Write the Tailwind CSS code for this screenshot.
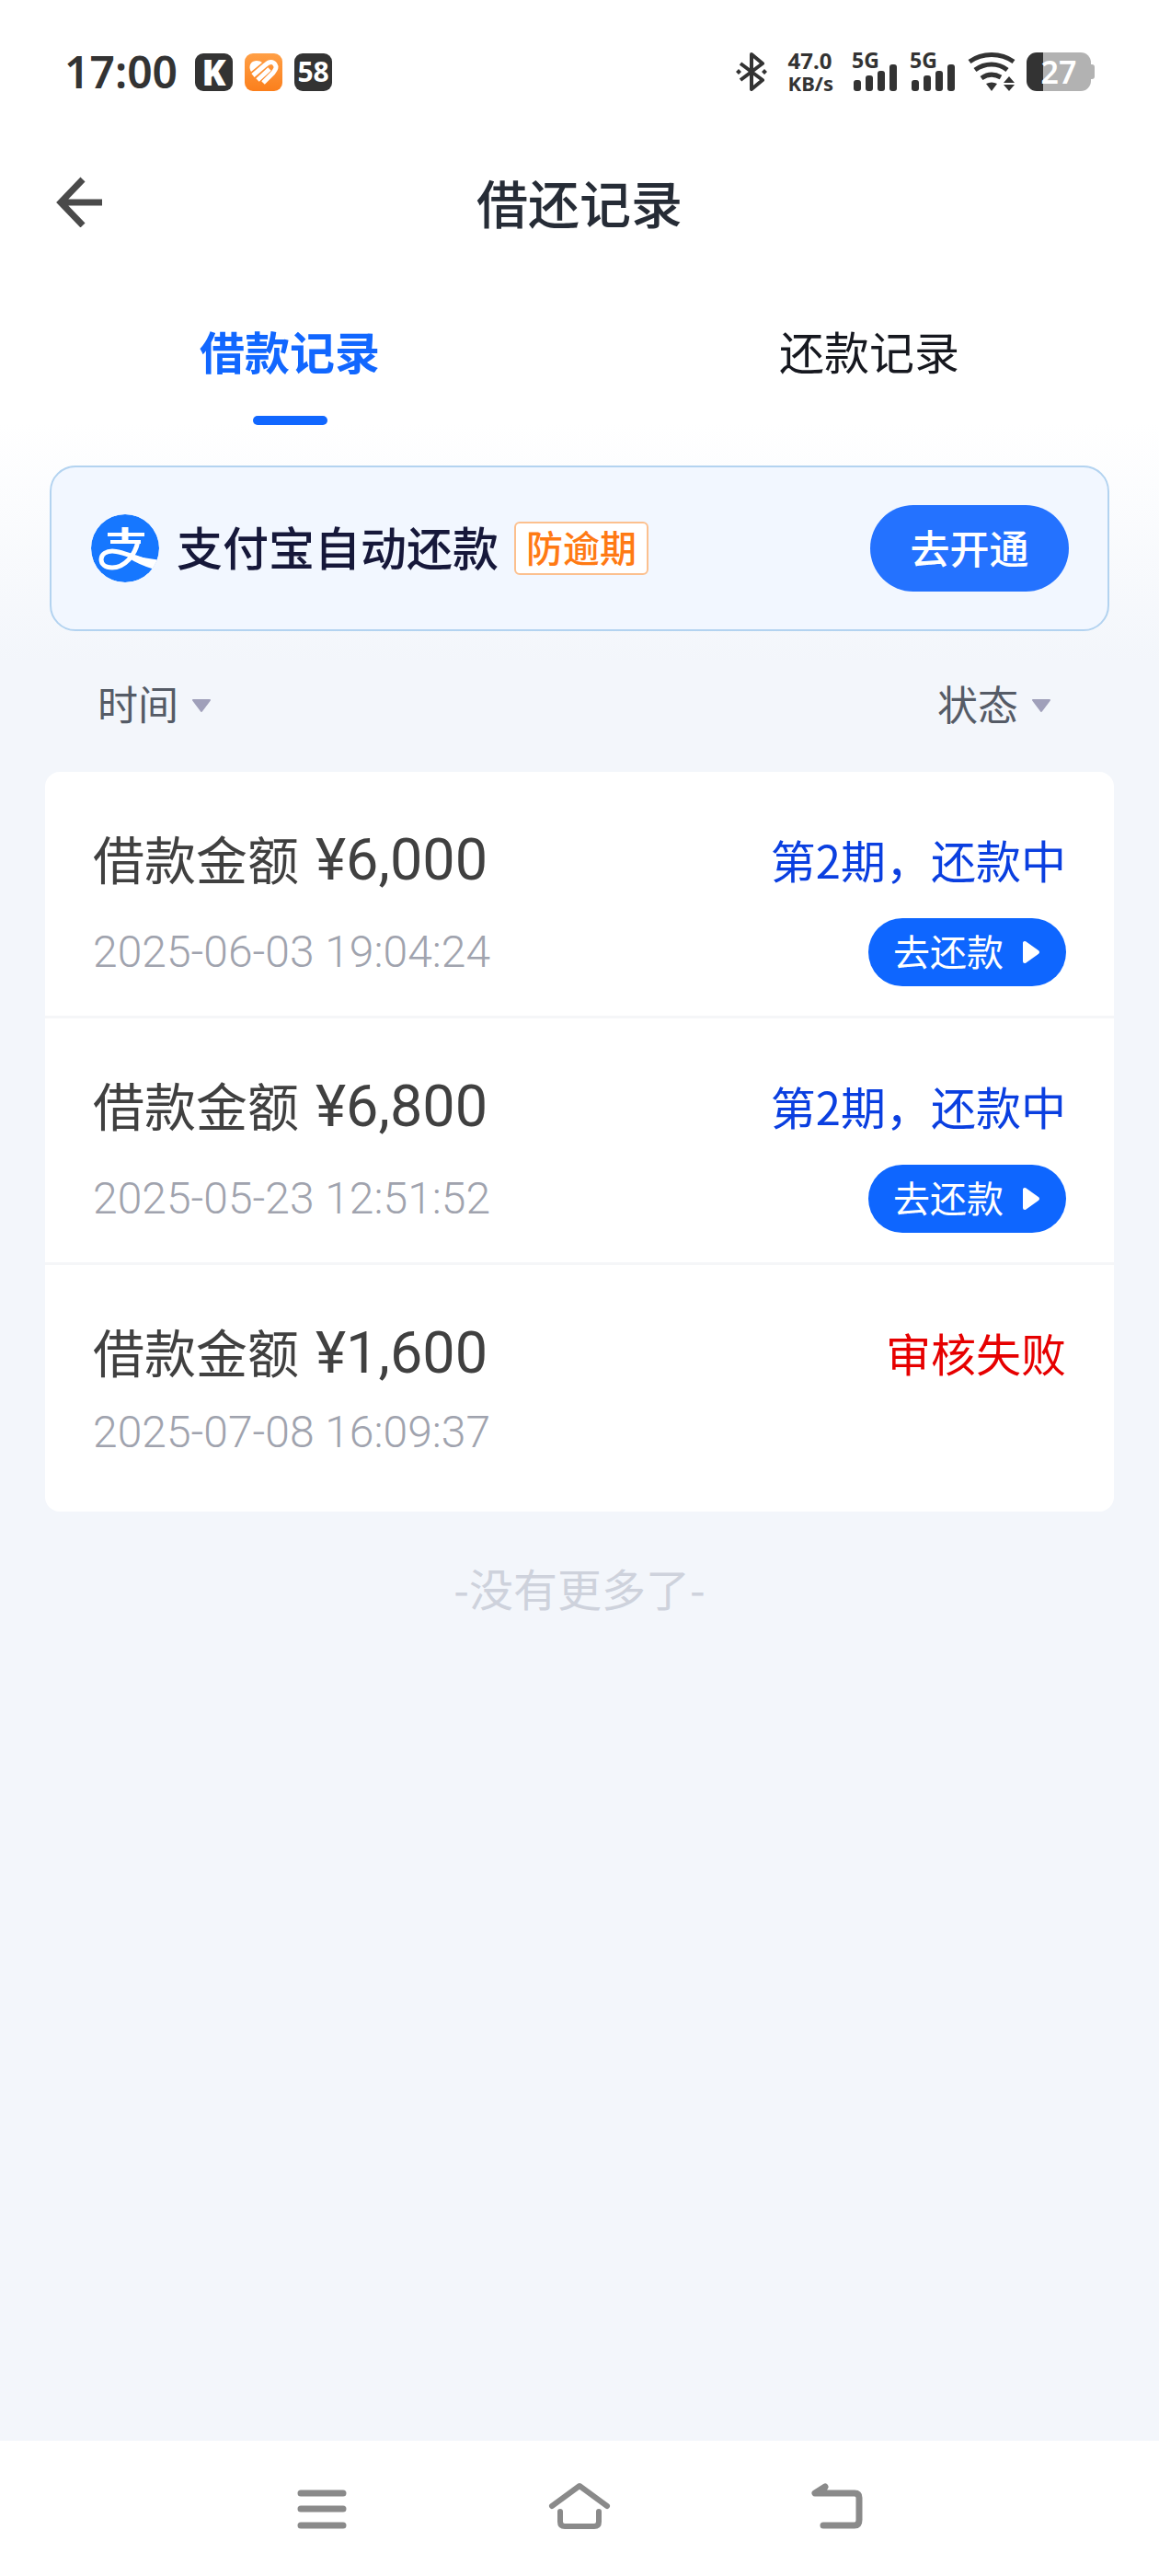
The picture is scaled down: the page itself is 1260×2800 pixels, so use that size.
<!DOCTYPE html>
<html lang="zh-CN">
<head>
<meta charset="utf-8">
<meta name="viewport" content="width=device-width, initial-scale=1">
<title>借还记录</title>
<script src="https://cdn.jsdelivr.net/npm/@tailwindcss/browser@4"></script>
</head>
<body class="flex min-h-screen flex-col bg-[#f3f6fb] bg-[linear-gradient(to_bottom,#ffffff_460px,#f3f6fb_720px)] font-['Noto_Sans_CJK_SC',sans-serif] text-[#404040]">

  <!-- Status bar -->
  <div class="flex items-center justify-between px-[70px] pt-[57px] font-['Noto_Sans',sans-serif] text-[#333333]">
    <div class="flex h-[42px] items-center gap-[13px]">
      <span class="mr-[6px] text-[48px] leading-[42px] font-semibold">17:00</span>
      <span class="flex size-[41px] items-center justify-center rounded-[9px] bg-[#333333] text-[38px] leading-none font-black text-white">K</span>
      <svg class="size-[41px]" viewBox="0 0 41 41" aria-hidden="true"><defs><linearGradient id="o" x2="0" y2="1"><stop stop-color="#ff9f45"/><stop offset="1" stop-color="#fb7f1c"/></linearGradient></defs><rect width="41" height="41" rx="9" fill="url(#o)"/><path d="M6 18C4 12 8 8 13 8q4 0 6 2L7 20z" fill="#fff"/><path d="M9 24 22 13c5-5 9-4 11-1s1 5-2 9L20 32M14 29l13-12" fill="none" stroke="#fff" stroke-width="5"/></svg>
      <span class="flex size-[41px] items-center justify-center rounded-[9px] bg-[#333333] text-[30px] leading-none font-bold text-white">58</span>
    </div>
    <div class="flex h-[42px] items-center">
      <svg class="mr-[22px] h-[42px] w-[36px]" viewBox="0 0 36 42" fill="none" stroke="#333" stroke-width="4" stroke-linejoin="round" aria-hidden="true"><path d="M6 12l24 18-12 10V2l12 10L6 30"/><path d="M4 18l3 3-3 3-3-3zM32 18l3 3-3 3-3-3z" fill="#333" stroke="none"/></svg>
      <span class="mr-[20px] flex flex-col text-[24px] leading-[24px] font-bold"><span>47.0</span><span class="text-[22px]">KB/s</span></span>
      <svg class="mr-[13px] h-[42px] w-[50px] overflow-visible" viewBox="0 0 50 42" fill="#333"><text x="0" y="17" font-size="23" font-weight="700">5G</text><rect x="2" y="30" width="8" height="12" rx="3"/><rect x="15" y="25" width="8" height="17" rx="3"/><rect x="28" y="20" width="8" height="22" rx="3"/><rect x="41" y="13" width="8" height="29" rx="3"/></svg>
      <svg class="mr-[13px] h-[42px] w-[50px] overflow-visible" viewBox="0 0 50 42" fill="#333"><text x="0" y="17" font-size="23" font-weight="700">5G</text><rect x="2" y="30" width="8" height="12" rx="3"/><rect x="15" y="25" width="8" height="17" rx="3"/><rect x="28" y="20" width="8" height="22" rx="3"/><rect x="41" y="13" width="8" height="29" rx="3"/></svg>
      <svg class="mr-[12px] h-[42px] w-[52px]" viewBox="0 0 52 42" fill="none" stroke="#333" stroke-width="5" aria-hidden="true"><path d="M2 10C16 0 36 0 50 10M8 19c11-8 25-8 35 0M15 28c7-5 14-5 21-1"/><path d="M20 34q6-3 12 0l-6 8zM45 26l6 7H39zM39 35h12l-6 7z" fill="#333" stroke="none"/></svg>
      <span class="flex h-[42px] w-[70px] items-center justify-center rounded-[11px] bg-[linear-gradient(to_right,#333333_18px,#b2b2b2_18px)] text-[34px] leading-[42px] font-semibold text-white">27</span>
      <span class="h-[16px] w-[4px] rounded-r-[3px] bg-[#b2b2b2]"></span>
    </div>
  </div>

  <!-- Page header -->
  <header class="grid grid-cols-[1fr_auto_1fr] items-center px-[60px] pt-[78px]">
    <button type="button" aria-label="返回" class="w-[52px]">
      <svg class="h-[56px] w-[52px]" viewBox="0 0 52 56" fill="none" stroke="#4a4a4a" stroke-width="7" aria-hidden="true"><path d="M30 4 6 29l24 25M6 29h45"/></svg>
    </button>
    <h1 class="text-[56px] leading-[84px] font-medium text-[#262c36]">借还记录</h1>
  </header>

  <!-- Tabs -->
  <nav class="grid grid-cols-2 pt-[84px] text-[49px] leading-[72px]">
    <a href="#" aria-current="page" class="flex flex-col items-center gap-[35px] font-bold text-[#1167ff]">借款记录<span class="h-[10px] w-[81px] rounded-full bg-[#1167ff]"></span></a>
    <a href="#" class="text-center text-[#16181f]">还款记录</a>
  </nav>

  <main class="px-[49px] pt-[44px] pb-[40px]">
    <!-- Auto repayment banner -->
    <section class="mx-[5px] flex h-[180px] items-center rounded-[28px] border-2 border-[#b3d3f0] bg-[#f2f7ff] pr-[42px] pl-[43px]">
      <svg class="size-[75px] shrink-0" viewBox="0 0 75 75" aria-hidden="true"><defs><clipPath id="c"><circle cx="37" cy="37" r="37"/></clipPath></defs><g clip-path="url(#c)"><circle cx="37" cy="37" r="37" fill="#1677ff"/><path d="M37 14v16" stroke="#fff" stroke-width="7"/><path d="M18 22h40M21 30h33" stroke="#fff" stroke-width="4"/><path d="M51 29C48 45 36 58 23 58c-8 0-12-4-12-9 0-6 6-9 12-9 10 0 22 6 46 14" fill="none" stroke="#fff" stroke-width="5"/><path d="M40 43q17 5 36 7L69 60Q52 55 40 47z" fill="#fff"/></g></svg>
      <h2 class="ml-[18px] pb-[6px] text-[50px] leading-[72px] font-medium text-[#16183a]">支付宝自动还款</h2>
      <span class="ml-[17px] rounded-[6px] border-2 border-[#fcc08e] bg-white px-[11px] pb-[4px] text-[40px] leading-[50px] font-medium text-[#ff7a14]">防逾期</span>
      <button type="button" class="ml-auto h-[94px] w-[216px] rounded-full bg-[#2472ff] pb-[4px] text-[43px] leading-[64px] font-medium text-white">去开通</button>
    </section>

    <!-- Filters -->
    <div class="mt-[46px] flex justify-between pr-[68px] pl-[57px] text-[44px] leading-[64px] text-[#555b66]">
      <button type="button" class="flex items-center gap-[14px]">时间<svg class="mt-[6px] h-[16px] w-[22px]" viewBox="0 0 22 16" aria-hidden="true"><path d="M2 2h18l-9 12z" fill="#a0a0ba" stroke="#a0a0ba" stroke-width="2" stroke-linejoin="round"/></svg></button>
      <button type="button" class="flex items-center gap-[14px]">状态<svg class="mt-[6px] h-[16px] w-[22px]" viewBox="0 0 22 16" aria-hidden="true"><path d="M2 2h18l-9 12z" fill="#a0a0ba" stroke="#a0a0ba" stroke-width="2" stroke-linejoin="round"/></svg></button>
    </div>

    <!-- Loan records -->
    <ul class="mt-[43px] divide-y-3 divide-[#f5f6f8] rounded-[16px] bg-white">
      <li class="flex min-h-[268px] flex-col gap-[25px] px-[52px] pt-[55px]">
        <div class="flex items-center justify-between leading-[76px]">
          <h3 class="flex items-baseline gap-[18px] text-[56px]">借款金额 <span class="font-[Roboto,sans-serif] text-[63px]">¥6,000</span></h3>
          <span class="text-[49px] text-[#0a3fe0]">第2期，还款中</span>
        </div>
        <div class="flex items-center justify-between">
          <time class="font-[Roboto,sans-serif] text-[48px] leading-[46px] font-light text-[#a0a3ae]">2025-06-03 19:04:24</time>
          <button type="button" class="flex h-[74px] w-[215px] items-center gap-[20px] rounded-full bg-[#0e66ff] pl-[27px] text-[40px] leading-[60px] text-white"><span class="pb-[4px]">去还款</span><svg class="h-[26px] w-[20px]" viewBox="0 0 20 26" aria-hidden="true"><path d="M3 3v20l14-10z" fill="#fff" stroke="#fff" stroke-width="4" stroke-linejoin="round"/></svg></button>
        </div>
      </li>
      <li class="flex min-h-[268px] flex-col gap-[25px] px-[52px] pt-[55px]">
        <div class="flex items-center justify-between leading-[76px]">
          <h3 class="flex items-baseline gap-[18px] text-[56px]">借款金额 <span class="font-[Roboto,sans-serif] text-[63px]">¥6,800</span></h3>
          <span class="text-[49px] text-[#0a3fe0]">第2期，还款中</span>
        </div>
        <div class="flex items-center justify-between">
          <time class="font-[Roboto,sans-serif] text-[48px] leading-[46px] font-light text-[#a0a3ae]">2025-05-23 12:51:52</time>
          <button type="button" class="flex h-[74px] w-[215px] items-center gap-[20px] rounded-full bg-[#0e66ff] pl-[27px] text-[40px] leading-[60px] text-white"><span class="pb-[4px]">去还款</span><svg class="h-[26px] w-[20px]" viewBox="0 0 20 26" aria-hidden="true"><path d="M3 3v20l14-10z" fill="#fff" stroke="#fff" stroke-width="4" stroke-linejoin="round"/></svg></button>
        </div>
      </li>
      <li class="flex min-h-[268px] flex-col gap-[25px] px-[52px] pt-[55px]">
        <div class="flex items-center justify-between leading-[76px]">
          <h3 class="flex items-baseline gap-[18px] text-[56px]">借款金额 <span class="font-[Roboto,sans-serif] text-[63px]">¥1,600</span></h3>
          <span class="text-[49px] text-[#e60000]">审核失败</span>
        </div>
        <time class="font-[Roboto,sans-serif] text-[48px] leading-[46px] font-light text-[#a0a3ae]">2025-07-08 16:09:37</time>
      </li>
    </ul>

    <p class="mt-[50px] text-center text-[48px] leading-[64px] text-[#ced2dc]">-没有更多了-</p>
  </main>

  <!-- System navigation -->
  <footer class="mt-auto flex h-[147px] items-center justify-center gap-[212px] bg-white pb-[6px]">
    <button type="button" aria-label="最近任务"><svg class="h-[52px] w-[68px]" viewBox="0 0 68 52" fill="none" stroke="#8a8a8a" stroke-width="7" stroke-linecap="round" aria-hidden="true"><path d="M11 12h46M11 29h46M11 47h46"/></svg></button>
    <button type="button" aria-label="主屏幕"><svg class="h-[52px] w-[68px]" viewBox="0 0 68 52" fill="none" stroke="#8a8a8a" stroke-width="6" stroke-linecap="round" stroke-linejoin="round" aria-hidden="true"><path d="M4 26 34 4l30 22M13 32v11q0 5 5 5h32q5 0 5-5V32"/></svg></button>
    <button type="button" aria-label="返回上一级"><svg class="h-[52px] w-[68px]" viewBox="0 0 68 52" fill="none" stroke="#8a8a8a" stroke-width="7" stroke-linecap="round" stroke-linejoin="round" aria-hidden="true"><path d="M21 5 10 12h43q5 0 5 5v24q0 6-5 6H19"/><path d="M10 12h12l2-6z" fill="#8a8a8a" stroke="none"/></svg></button>
  </footer>
</body>
</html>
